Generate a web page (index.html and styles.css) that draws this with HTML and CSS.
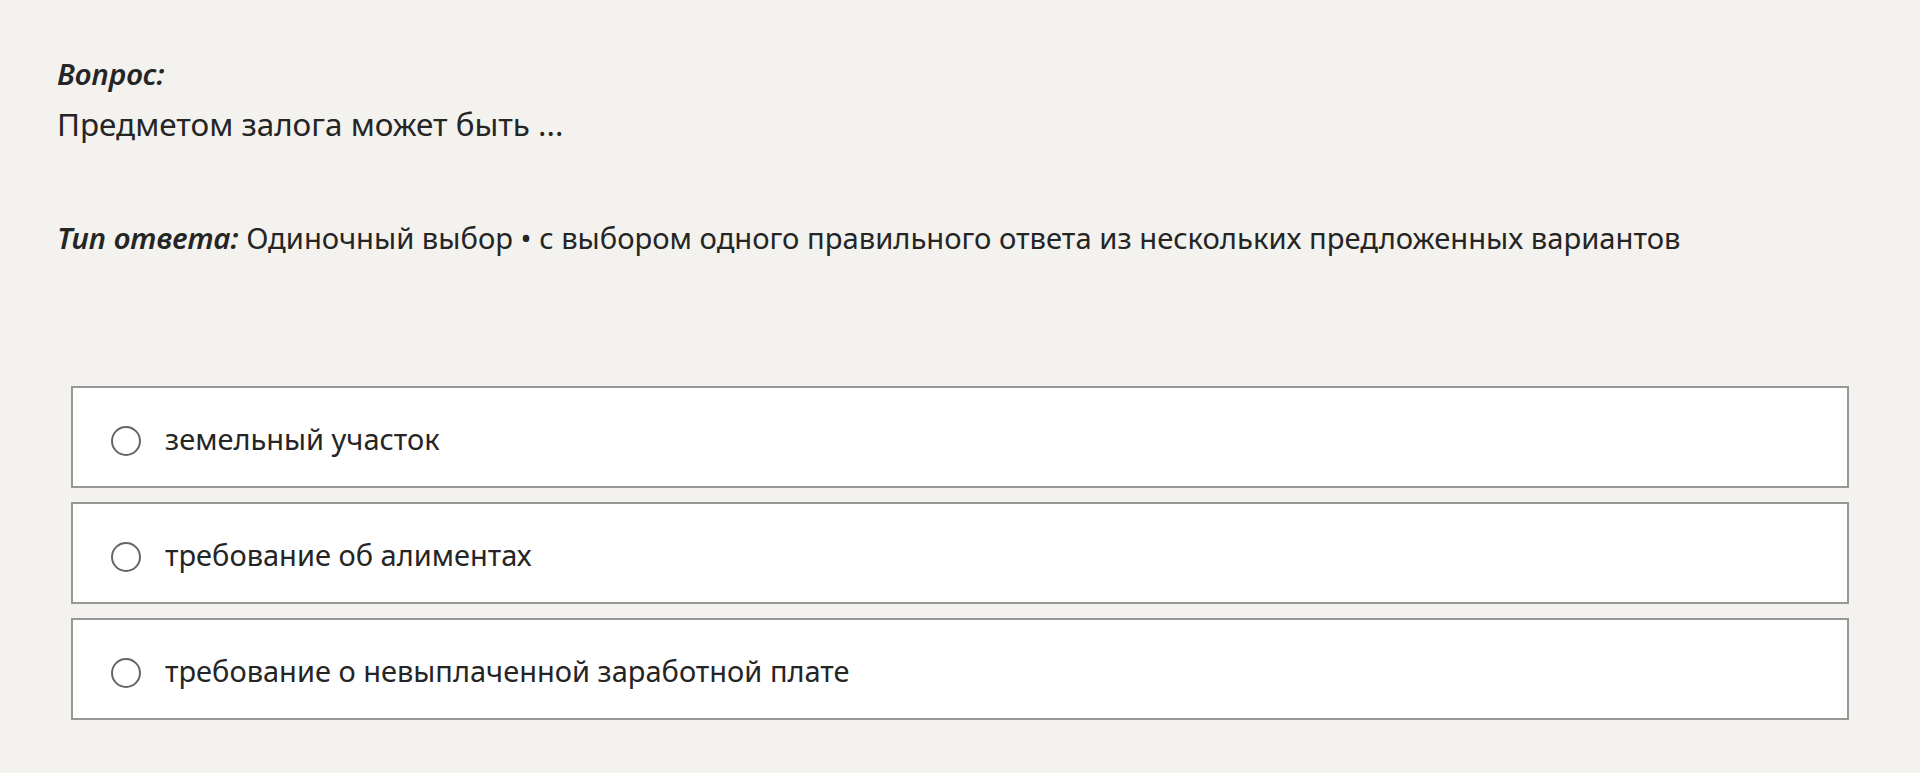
FILE: index.html
```html
<!DOCTYPE html>
<html lang="ru">
<head>
<meta charset="utf-8">
<title>Вопрос</title>
<link rel="stylesheet" href="styles.css">
</head>
<body>
<main class="quiz">
  <section class="question">
    <p class="label">Вопрос:</p>
    <p class="question-text">Предметом залога может быть ...</p>
  </section>
  <p class="answer-type"><span class="label">Тип ответа:</span> Одиночный выбор • с выбором одного правильного ответа из нескольких предложенных вариантов</p>
  <ul class="options">
    <li class="option"><span class="radio"></span><span class="option-text">земельный участок</span></li>
    <li class="option"><span class="radio"></span><span class="option-text">требование об алиментах</span></li>
    <li class="option"><span class="radio"></span><span class="option-text">требование о невыплаченной заработной плате</span></li>
  </ul>
</main>
</body>
</html>
```
FILE: styles.css
```css
html, body {
  margin: 0;
  padding: 0;
  background: #f3f2ee;
}

body {
  font-family: "Noto Sans", "Open Sans", sans-serif;
  font-size: 29px;
  line-height: 50px;
  color: #252525;
}

.quiz {
  padding: 49px 71px 0 57px;
}

.question p,
.answer-type {
  margin: 0;
}

.label {
  font-size: 29.5px;
  font-weight: 600;
  font-style: italic;
}

.question-text {
  font-size: 31.4px;
}

.answer-type {
  margin-top: 64px;
  font-size: 29.2px;
}

.options {
  list-style: none;
  margin: 123px 0 0 14px;
  padding: 0;
  display: flex;
  flex-direction: column;
  gap: 14px;
}

.option {
  display: flex;
  align-items: center;
  gap: 24px;
  padding: 26px 0 22px 38px;
  background: #ffffff;
  border: 2px solid #979795;
}

.option-text {
  font-size: 29px;
}

.radio {
  flex: none;
  width: 26px;
  height: 26px;
  margin-top: 4px;
  border: 2px solid #666666;
  border-radius: 50%;
}
```
